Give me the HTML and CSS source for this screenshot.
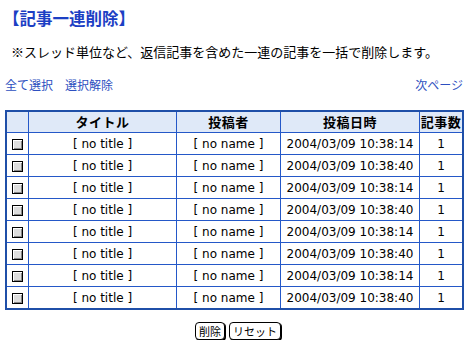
FILE: index.html
```html
<!DOCTYPE html>
<html lang="ja">
<head>
<meta charset="UTF-8" />
<title>記事一連削除</title>
<link rel="stylesheet" href="styles.css">
</head>
<body>

<h1>【記事一連削除】</h1>

<p class="note">※スレッド単位など、返信記事を含めた一連の記事を一括で削除します。</p>

<div class="nav">
  <div><a href="#">全て選択</a><a href="#">選択解除</a></div>
  <a href="#">次ページ</a>
</div>

<form>
<table class="list">
  <tr>
    <th class="chk"></th>
    <th class="c-title">タイトル</th>
    <th class="c-name">投稿者</th>
    <th class="c-date">投稿日時</th>
    <th class="c-count">記事数</th>
  </tr>
  <tr><td class="chk"><input type="checkbox"></td><td>[ no title ]</td><td>[ no name ]</td><td>2004/03/09 10:38:14</td><td>1</td></tr>
  <tr><td class="chk"><input type="checkbox"></td><td>[ no title ]</td><td>[ no name ]</td><td>2004/03/09 10:38:40</td><td>1</td></tr>
  <tr><td class="chk"><input type="checkbox"></td><td>[ no title ]</td><td>[ no name ]</td><td>2004/03/09 10:38:14</td><td>1</td></tr>
  <tr><td class="chk"><input type="checkbox"></td><td>[ no title ]</td><td>[ no name ]</td><td>2004/03/09 10:38:40</td><td>1</td></tr>
  <tr><td class="chk"><input type="checkbox"></td><td>[ no title ]</td><td>[ no name ]</td><td>2004/03/09 10:38:14</td><td>1</td></tr>
  <tr><td class="chk"><input type="checkbox"></td><td>[ no title ]</td><td>[ no name ]</td><td>2004/03/09 10:38:40</td><td>1</td></tr>
  <tr><td class="chk"><input type="checkbox"></td><td>[ no title ]</td><td>[ no name ]</td><td>2004/03/09 10:38:14</td><td>1</td></tr>
  <tr><td class="chk"><input type="checkbox"></td><td>[ no title ]</td><td>[ no name ]</td><td>2004/03/09 10:38:40</td><td>1</td></tr>
</table>

<div class="buttons">
  <button type="button">削除</button>
  <button type="reset">リセット</button>
</div>
</form>

</body>
</html>
```

FILE: styles.css
```css
body {
  margin: 0;
  padding: 0 5px;
  font-family: "Noto Sans CJK JP", "Liberation Sans", sans-serif;
  font-size: 12px;
  color: #000;
  background: #fff;
}
h1 {
  margin: 0 0 0 -2px;
  padding-top: 8px;
  height: 22px;
  font-size: 16.5px;
  line-height: 20px;
  font-weight: bold;
  color: #1c3fc4;
}
.note {
  margin: 13px 0 0 6px;
  height: 18px;
  font-size: 13px;
  line-height: 18px;
}
.nav {
  display: flex;
  justify-content: space-between;
  margin-top: 16px;
  height: 16px;
  line-height: 16px;
}
.nav a {
  color: #2d4fc0;
  text-decoration: none;
  margin-right: 12px;
}
.nav > a {
  margin-right: 2px;
}
.list {
  margin-top: 17px;
  width: 459px;
  border-collapse: collapse;
  border: 2px solid #1f4fa8;
}
.list th,
.list td {
  border: 1px solid #2458c8;
  height: 20px;
  padding: 0;
  text-align: center;
  line-height: 20px;
  white-space: nowrap;
}
.list td {
  height: 21px;
  font-family: "DejaVu Sans", "Noto Sans CJK JP", sans-serif;
  font-size: 12px;
}
.list th {
  background: #dfe9f8;
  font-size: 13px;
  font-weight: bold;
  letter-spacing: 0.5px;
}
.chk {
  width: 21px;
}
.c-title { width: 147px; }
.c-name { width: 103px; }
.c-date { width: 138px; }
.list td.chk input {
  margin: 0;
  width: 11px;
  height: 11px;
  vertical-align: middle;
  appearance: none;
  border: 1px solid #000;
  background: #ddd;
  box-shadow: inset 1px 1px 0 #fff, inset -1px -1px 0 #888;
}
.buttons {
  display: flex;
  justify-content: center;
  gap: 4px;
  margin-top: 12px;
  padding-left: 6px;
}
.buttons button {
  font-family: inherit;
  font-size: 11px;
  line-height: 16px;
  height: 18px;
  padding: 0 3px;
  background: #fff;
  border: 1px solid #000;
  border-radius: 4px;
  box-shadow: 1px 1px 0 #000;
}
```
